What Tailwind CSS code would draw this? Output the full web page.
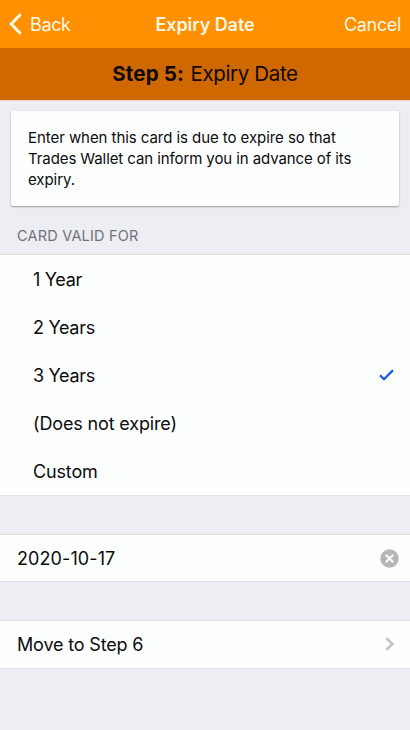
<!DOCTYPE html>
<html lang="en">
<head>
<meta charset="utf-8">
<title>Expiry Date</title>
<script src="https://cdn.jsdelivr.net/npm/@tailwindcss/browser@4"></script>
</head>
<body class="bg-[#ededf4] font-['Inter',sans-serif] text-[#0c0c0c]">
<div class="flex h-[730px] w-[410px] flex-col overflow-hidden whitespace-nowrap">
  <header class="grid h-12 shrink-0 grid-cols-[1fr_auto_1fr] items-center bg-[#ff9000] pr-[9px] pl-[9px] text-[18px] text-[#fff6e4]">
    <div class="flex items-center gap-[8px]">
      <svg class="h-[22px] w-[13px]" viewBox="0 0 13 22" fill="none" stroke="#fffaf0" stroke-width="3"><path d="M11.7 1.2 2.2 11l9.5 9.8"/></svg>
      <span class="tracking-[-0.35px]">Back</span>
    </div>
    <h1 class="font-semibold tracking-[-0.05px]">Expiry Date</h1>
    <span class="text-right tracking-[-0.35px]">Cancel</span>
  </header>
  <div class="flex h-[52px] shrink-0 items-center justify-center bg-[#cf6800] text-[20.5px] tracking-[-0.35px] text-[#100800]"><p><b class="mr-px font-bold tracking-[0.15px]">Step 5:</b> Expiry Date</p></div>
  <main class="flex flex-col border-t border-[#f8d0c4]">
    <section class="mx-[11px] mt-[10px] h-[95px] rounded-[2px] bg-[#fdfefe] px-[17px] pt-[16px] text-[15px] leading-[21px] tracking-[-0.06px] shadow-[0_1px_2px_rgba(0,0,0,0.35)]">
      <p>Enter when this card is due to expire so that<br><span class="tracking-[-0.09px]">Trades Wallet can inform you in advance of its</span><br>expiry.</p>
    </section>
    <h2 class="flex h-[48px] items-center px-[17px] pt-[12px] text-[14.5px] tracking-[0.2px] text-[#727277]">CARD VALID FOR</h2>
    <ul class="h-[242px] border-y border-[#dfdfe5] bg-[#fdfefe] pr-[16px] pl-[33px] text-[18px] tracking-[-0.3px]">
      <li class="flex h-12 items-center">1 Year</li>
      <li class="flex h-12 items-center">2 Years</li>
      <li class="flex h-12 items-center justify-between">3 Years<svg class="h-[12px] w-[15px]" viewBox="0 0 15 12" fill="none" stroke="#1558df" stroke-width="2.3"><path d="m1 6.2 4 4L14 1.2"/></svg></li>
      <li class="flex h-12 items-center tracking-[-0.15px]">(Does not expire)</li>
      <li class="flex h-12 items-center tracking-[-0.15px]">Custom</li>
    </ul>
    <div class="mt-[38px] flex h-[48px] items-center justify-between border-y border-[#dfdfe5] bg-[#fdfefe] pr-[11px] pl-[17px] text-[18px] tracking-[0.1px]">
      <span>2020-10-17</span>
      <svg class="h-[19px] w-[19px]" viewBox="0 0 19 19" fill="none"><circle cx="9.5" cy="9.5" r="9.2" fill="#b5b6b8"/><path d="m5.8 5.8 7.4 7.4m0-7.4-7.4 7.4" stroke="#fff" stroke-width="2"/></svg>
    </div>
    <div class="mt-[38px] flex h-[49px] items-center justify-between border-y border-[#dfdfe5] bg-[#fdfefe] pr-[16px] pb-px pl-[17px] text-[18px] tracking-[-0.16px]">
      <span>Move to Step 6</span>
      <svg class="h-[14px] w-[9px]" viewBox="0 0 9 14" fill="none" stroke="#c3c3c9" stroke-width="2.6"><path d="m1.2 1 6.1 6-6.1 6"/></svg>
    </div>
  </main>
</div>
</body>
</html>
